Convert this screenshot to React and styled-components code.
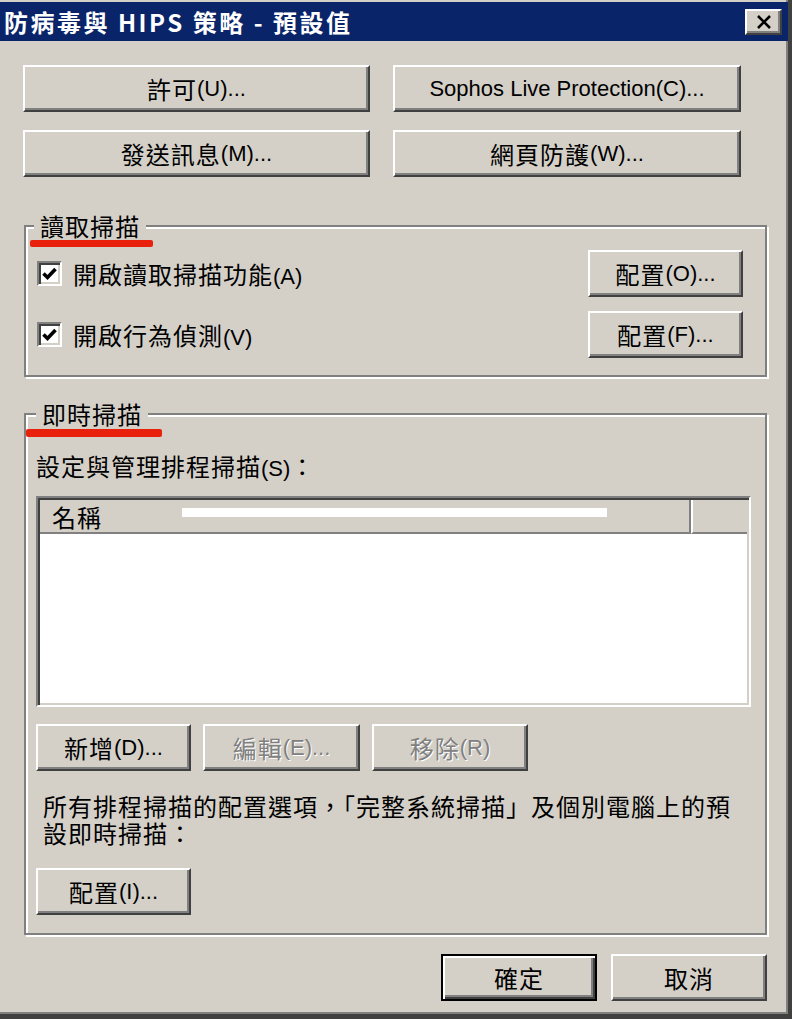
import React from 'react';
import styled, { createGlobalStyle, css } from 'styled-components';

const Global = createGlobalStyle`
  html, body { margin: 0; padding: 0; background: #d4d0c8; }
  * { box-sizing: border-box; }
`;

const Window = styled.div`
  width: 792px;
  height: 1019px;
  background: #d4d0c8;
  display: flex;
  flex-direction: column;
  border-right: 4px solid #404040;
  border-bottom: 5px solid #404040;
  box-shadow: inset -2px -2px 0 #808080;
  font-family: "Noto Sans CJK TC", "Noto Sans CJK SC", sans-serif;
  font-size: 24px;
  color: #000;
  letter-spacing: 1px;
  overflow: hidden;
`;

const TitleBar = styled.div`
  margin-top: 2px;
  height: 39px;
  background: #0a246a;
  display: flex;
  align-items: center;
  justify-content: space-between;
  padding: 0 6px 0 4px;
`;

const TitleText = styled.div`
  color: #fff;
  font-weight: 700;
  font-size: 24px;
  letter-spacing: 2.5px;
  line-height: 1;
`;

const CloseBtn = styled.div`
  width: 37px;
  height: 26px;
  background: #d4d0c8;
  border: 2px solid;
  border-color: #fff #404040 #404040 #fff;
  box-shadow: inset -2px -2px 0 #808080;
  display: flex;
  align-items: center;
  justify-content: center;
`;

const Body = styled.div`
  flex: 1;
  display: flex;
  flex-direction: column;
  padding: 24px 21px 0 23px;
`;

const TopGrid = styled.div`
  display: grid;
  grid-template-columns: 347px 348px;
  column-gap: 23px;
  row-gap: 18px;
`;

const Button = styled.button`
  height: 47px;
  width: ${p => (p.$w ? `${p.$w}px` : 'auto')};
  background: #d4d0c8;
  border: 2px solid;
  border-color: #fff #404040 #404040 #fff;
  box-shadow: inset -2px -2px 0 #808080;
  font-family: "Noto Sans CJK TC", "Noto Sans CJK SC", sans-serif;
  font-size: 24px;
  letter-spacing: 1px;
  color: #000;
  padding: 0;
  display: flex;
  align-items: center;
  justify-content: center;
  flex: none;
  ${p => p.disabled && css`
    color: #808080;
    text-shadow: 1px 1px 0 #fff;
  `}
  ${p => p.$default && css`
    border: 2px solid #000;
    box-shadow: inset 2px 2px 0 #fff, inset -2px -2px 0 #404040, inset -4px -4px 0 #808080;
  `}
`;

const Latin = styled.span`
  font-family: "Liberation Sans", Arial, sans-serif;
  font-size: 22px;
  letter-spacing: 0;
`;

const Group = styled.div`
  position: relative;
  margin-top: ${p => p.$mt}px;
  margin-left: 1px;
  border: 2px solid #808080;
  box-shadow: inset 2px 2px 0 #fff, 2px 2px 0 #fff;
  padding: ${p => p.$pad};
`;

const Legend = styled.div`
  position: absolute;
  top: -14px;
  left: ${p => p.$left}px;
  padding: 0 6px;
  background: #d4d0c8;
  line-height: 26px;
  font-size: 24px;
`;

const RedMark = styled.div`
  position: absolute;
  left: ${p => p.$left}px;
  top: ${p => p.$top}px;
  width: ${p => p.$width}px;
  height: ${p => p.$h}px;
  background: #e8200c;
  border-radius: 2px;
`;

const ScanRows = styled.div`
  display: grid;
  row-gap: 14px;
`;

const ScanRow = styled.div`
  height: 47px;
  display: flex;
  align-items: center;
  justify-content: space-between;
`;

const CheckLabel = styled.label`
  display: flex;
  align-items: center;
  gap: 11px;
`;

const CheckBox = styled.span`
  width: 25px;
  height: 25px;
  background: #fff;
  border: 2px solid;
  border-color: #808080 #fff #fff #808080;
  box-shadow: inset 2px 2px 0 #404040, inset -2px -2px 0 #d4d0c8;
  display: flex;
  align-items: center;
  justify-content: center;
`;

const FieldLabel = styled.div`
  line-height: 28px;
`;

const List = styled.div`
  margin-top: 13px;
  height: 211px;
  background: #fff;
  border: 2px solid;
  border-color: #808080 #fff #fff #808080;
  box-shadow: inset 2px 2px 0 #404040, inset -2px -2px 0 #d4d0c8;
  padding: 2px;
  display: flex;
  flex-direction: column;
`;

const ListHeader = styled.div`
  height: 34px;
  display: flex;
  background: #d4d0c8;
`;

const HeaderCell = styled.div`
  flex: ${p => (p.$w ? `0 0 ${p.$w}px` : '1')};
  display: flex;
  align-items: center;
  padding-left: 12px;
  border-bottom: 2px solid #808080;
  border-right: ${p => (p.$w ? '2px solid #808080' : 'none')};
  border-left: ${p => (p.$w ? 'none' : '2px solid #fff')};
`;

const Redact = styled.span`
  align-self: flex-start;
  margin-top: 8px;
  margin-left: 80px;
  width: 425px;
  height: 9px;
  background: #fff;
`;

const ButtonRow = styled.div`
  display: flex;
  gap: 12px;
  margin-top: ${p => p.$mt}px;
`;

const Para = styled.div`
  margin: 21px 0 0 7px;
  white-space: nowrap;
`;

const ParaLine = styled.div`
  height: 27px;
  line-height: 27px;
`;

const Footer = styled.div`
  display: flex;
  justify-content: flex-end;
  gap: 14px;
  margin-top: 19px;
`;

const Check = () => (
  <svg width="17" height="17" viewBox="0 0 17 17">
    <polyline points="2.5,8.5 6.5,12.5 14.5,4" fill="none" stroke="#000" strokeWidth="3.6" />
  </svg>
);

const CloseIcon = () => (
  <svg width="16" height="14" viewBox="0 0 16 14">
    <path d="M2 1 L14 13 M14 1 L2 13" stroke="#000" strokeWidth="2.6" />
  </svg>
);

export default function App() {
  return (
    <>
      <Global />
      <Window>
        <TitleBar>
          <TitleText>防病毒與 HIPS 策略 - 預設值</TitleText>
          <CloseBtn><CloseIcon /></CloseBtn>
        </TitleBar>
        <Body>
          <TopGrid>
            <Button>許可<Latin>(U)...</Latin></Button>
            <Button><Latin>Sophos Live Protection(C)...</Latin></Button>
            <Button>發送訊息<Latin>(M)...</Latin></Button>
            <Button>網頁防護<Latin>(W)...</Latin></Button>
          </TopGrid>

          <Group $mt={48} $pad="23px 22px 17px 11px">
            <Legend $left={8}>讀取掃描</Legend>
            <RedMark $left={4} $top={13} $width={123} $h={7} />
            <ScanRows>
              <ScanRow>
                <CheckLabel>
                  <CheckBox><Check /></CheckBox>
                  <span>開啟讀取掃描功能<Latin>(A)</Latin></span>
                </CheckLabel>
                <Button $w={155}>配置<Latin>(O)...</Latin></Button>
              </ScanRow>
              <ScanRow>
                <CheckLabel>
                  <CheckBox><Check /></CheckBox>
                  <span>開啟行為偵測<Latin>(V)</Latin></span>
                </CheckLabel>
                <Button $w={155}>配置<Latin>(F)...</Latin></Button>
              </ScanRow>
            </ScanRows>
          </Group>

          <Group $mt={36} $pad="37px 14px 18px 10px">
            <Legend $left={10}>即時掃描</Legend>
            <RedMark $left={0} $top={14} $width={136} $h={8} />
            <FieldLabel>設定與管理排程掃描<Latin>(S)</Latin>：</FieldLabel>
            <List>
              <ListHeader>
                <HeaderCell $w={651}>名稱<Redact /></HeaderCell>
                <HeaderCell />
              </ListHeader>
            </List>
            <ButtonRow $mt={17}>
              <Button $w={155}>新增<Latin>(D)...</Latin></Button>
              <Button $w={157} disabled>編輯<Latin>(E)...</Latin></Button>
              <Button $w={156} disabled>移除<Latin>(R)</Latin></Button>
            </ButtonRow>
            <Para>
              <ParaLine>所有排程掃描的配置選項，「完整系統掃描」及個別電腦上的預</ParaLine>
              <ParaLine>設即時掃描：</ParaLine>
            </Para>
            <ButtonRow $mt={22}>
              <Button $w={155}>配置<Latin>(I)...</Latin></Button>
            </ButtonRow>
          </Group>

          <Footer>
            <Button $w={156} $default>確定</Button>
            <Button $w={156}>取消</Button>
          </Footer>
        </Body>
      </Window>
    </>
  );
}
